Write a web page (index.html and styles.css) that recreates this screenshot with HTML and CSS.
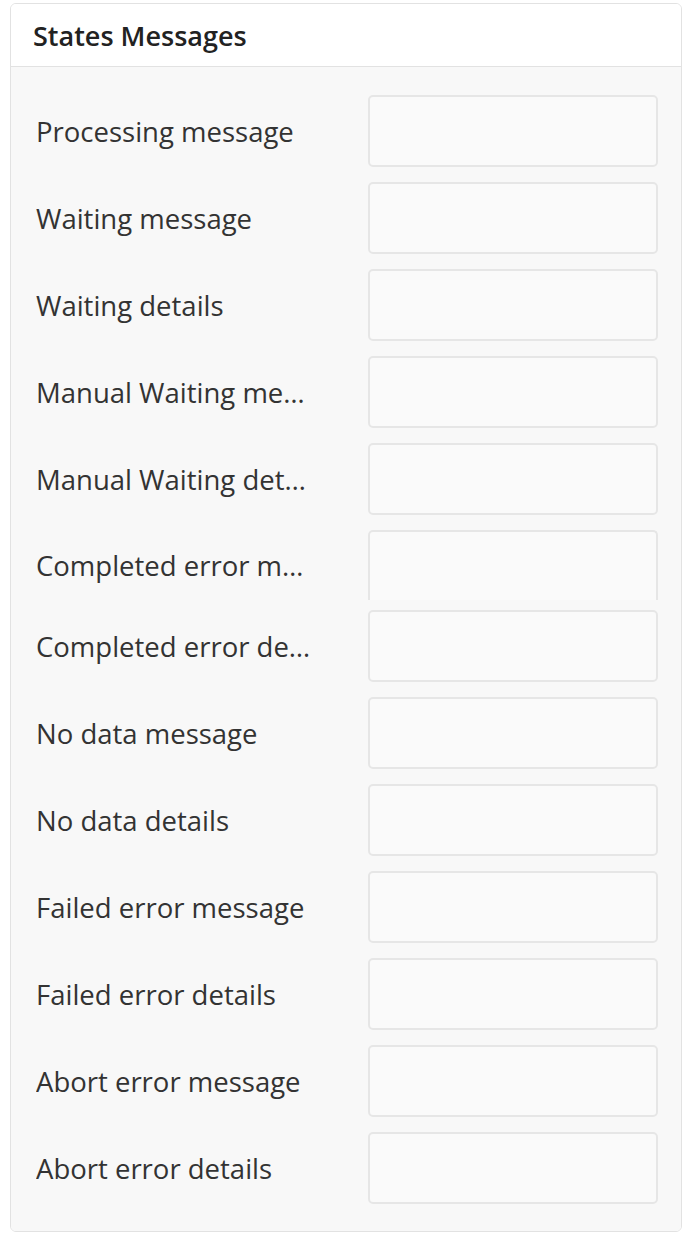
FILE: index.html
```html
<!DOCTYPE html>
<html lang="en">
<head>
    <meta charset="UTF-8">
    <meta name="viewport" content="width=device-width, initial-scale=1.0">
    <title>States Messages</title>
    <link rel="stylesheet" href="styles.css">
</head>
<body>
    <div class="panel">
        <div class="panel-header">States Messages</div>
        <div class="panel-body">
            <div class="row"><label>Processing message</label><input type="text"></div>
            <div class="row"><label>Waiting message</label><input type="text"></div>
            <div class="row"><label>Waiting details</label><input type="text"></div>
            <div class="row"><label>Manual Waiting message</label><input type="text"></div>
            <div class="row"><label>Manual Waiting details</label><input type="text"></div>
            <div class="row cut"><label>Completed error message</label><input type="text"></div>
            <div class="row"><label>Completed error details</label><input type="text"></div>
            <div class="row"><label>No data message</label><input type="text"></div>
            <div class="row"><label>No data details</label><input type="text"></div>
            <div class="row"><label>Failed error message</label><input type="text"></div>
            <div class="row"><label>Failed error details</label><input type="text"></div>
            <div class="row"><label>Abort error message</label><input type="text"></div>
            <div class="row"><label>Abort error details</label><input type="text"></div>
        </div>
    </div>
</body>
</html>
```

FILE: styles.css
```css
body {
    margin: 0;
    background-color: #ffffff;
    color: #333333;
    font-family: "Open Sans", "Noto Sans", sans-serif;
}
.panel {
    position: relative;
    width: 670px;
    margin: 3px 0 0 10px;
    border: 1px solid #e2e2e2;
    border-radius: 6px;
    overflow: hidden;
}
.panel-header {
    height: 62px;
    padding-left: 22px;
    display: flex;
    align-items: center;
    background-color: #ffffff;
    border-bottom: 1px solid #e2e2e2;
    font-size: 27px;
    font-weight: 600;
    color: #222222;
}
.panel-body {
    display: flex;
    flex-direction: column;
    gap: 15px;
    padding: 28px 23px 27px 25px;
    background-color: #f8f8f8;
}
.row {
    display: flex;
    align-items: center;
    justify-content: space-between;
    height: 72px;
}
.row label {
    width: 276px;
    font-size: 27.5px;
    white-space: nowrap;
    overflow: hidden;
    text-overflow: ellipsis;
    color: #333333;
}
.row input {
    box-sizing: border-box;
    width: 290px;
    height: 72px;
    margin: 0;
    background-color: #fafafa;
    border: 2px solid #e6e6e6;
    border-radius: 5px;
    outline: none;
}
.row.cut {
    height: 70px;
    margin-bottom: -5px;
}
.row.cut input {
    height: 70px;
    border-bottom: none;
    border-radius: 5px 5px 0 0;
}
.row.cut::before {
    content: "";
    position: absolute;
    left: -11px;
    margin-top: 70px;
    width: 8px;
    height: 1px;
    background-color: #aaaaaa;
}
```
